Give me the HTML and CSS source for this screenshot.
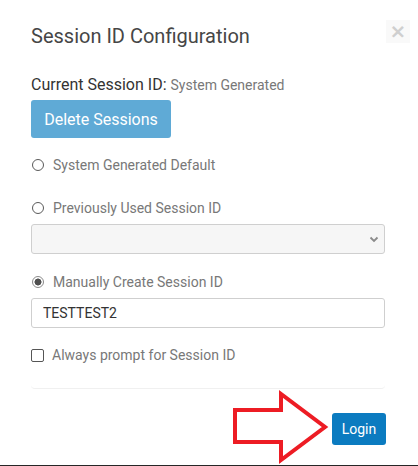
FILE: index.html
```html
<!DOCTYPE html>
<html>
<head>
<meta charset="utf-8">
<link rel="stylesheet" href="styles.css">
</head>
<body>
<div class="page">
  <div class="modal">
    <div class="header">
      <h1 class="title">Session ID Configuration</h1>
      <button class="close" type="button">&times;</button>
    </div>
    <div class="panel">
      <div class="current"><span class="current-label">Current Session ID:</span> <span class="current-value">System Generated</span></div>
      <button class="btn-delete" type="button">Delete Sessions</button>
      <label class="option opt-first"><input type="radio" name="sid" class="radio"><span>System Generated Default</span></label>
      <label class="option opt-prev"><input type="radio" name="sid" class="radio"><span>Previously Used Session ID</span></label>
      <div class="select"><svg width="10" height="7" viewBox="0 0 10 7"><path d="M1.5 1.5 L5 5 L8.5 1.5" fill="none" stroke="#8a8a8a" stroke-width="1.8"/></svg></div>
      <label class="option opt-manual"><input type="radio" name="sid" class="radio" checked><span>Manually Create Session ID</span></label>
      <input class="text-input" type="text" value="TESTTEST2">
      <label class="option opt-check"><input type="checkbox" class="check"><span>Always prompt for Session ID</span></label>
    </div>
    <div class="footer">
      <button class="btn-login" type="button">Login</button>
    </div>
  </div>
  <svg class="arrow" width="418" height="466" viewBox="0 0 418 466">
    <polygon points="235,410 281,410 281,394 325,427 281,460 281,442 235,442" fill="none" stroke="#ed1c24" stroke-width="4" stroke-linejoin="miter"/>
  </svg>
</div>
</body>
</html>
```

FILE: styles.css
```css
* { box-sizing: border-box; }
html, body { margin: 0; padding: 0; background: #fff; }
body { font-family: Roboto, "Liberation Sans", Arial, sans-serif; }
.page {
  position: relative;
  width: 418px;
  height: 466px;
  border-bottom: 1px solid #262626;
  overflow: hidden;
}
.modal { padding: 24px 33px 0 31px; }
.header { display: flex; justify-content: space-between; align-items: flex-start; }
.title {
  margin: 0;
  font-size: 20px;
  line-height: 24px;
  font-weight: 400;
  color: #464646;
}
.close {
  margin: -4px -25px 0 0;
  width: 24px;
  height: 23px;
  padding: 0;
  border: 0;
  background: #f9f9f9;
  color: #cfcfcf;
  font-family: "DejaVu Sans", sans-serif;
  font-size: 20px;
  font-weight: 700;
  line-height: 23px;
  text-align: center;
}
.panel {
  display: flex;
  flex-direction: column;
  align-items: flex-start;
  padding-bottom: 23px;
  border-bottom: 1px solid #f0f0f0;
  border-radius: 0 0 4px 4px;
}
.current { margin-top: 27px; line-height: 20px; }
.current-label { font-size: 16px; color: #333; }
.current-value { font-size: 14px; color: #787878; }
.btn-delete {
  margin-top: 5px;
  height: 38px;
  width: 140px;
  padding: 0;
  border: 0;
  border-radius: 3px;
  background: #5faad6;
  color: #fff;
  font-family: inherit;
  font-size: 16px;
}
.option {
  display: flex;
  align-items: center;
  height: 20px;
  font-size: 14px;
  line-height: 20px;
  color: #787878;
}
.opt-first { margin-top: 17px; }
.opt-prev { margin-top: 23px; }
.opt-manual { margin-top: 18px; }
.opt-check { margin-top: 17px; }
.radio {
  appearance: none;
  -webkit-appearance: none;
  width: 12px;
  height: 12px;
  margin: 0 9px 0 1px;
  border: 1px solid #5a5a5a;
  border-radius: 50%;
  background: #fff;
}
.radio:checked {
  border-color: #8a8a8a;
  background: radial-gradient(circle, #4f4f4f 0 3.2px, #fff 3.8px);
}
.check {
  appearance: none;
  -webkit-appearance: none;
  width: 13px;
  height: 13px;
  margin: 0 8px 0 0;
  border: 1px solid #555;
  border-radius: 2px;
  background: #fff;
}
.select {
  display: flex;
  justify-content: flex-end;
  align-items: center;
  margin-top: 6px;
  width: 354px;
  height: 30px;
  padding-right: 5px;
  border: 1px solid #cfcfcf;
  border-radius: 3px;
  background: #f6f6f6;
}
.text-input {
  margin-top: 6px;
  width: 354px;
  height: 30px;
  padding: 0 11px;
  border: 1px solid #cfcfcf;
  border-radius: 3px;
  background: #fff;
  color: #333;
  font-family: inherit;
  font-size: 14px;
  outline: none;
}
.footer { display: flex; justify-content: flex-end; margin-right: -1px; padding-top: 24px; }
.btn-login {
  width: 54px;
  height: 32px;
  padding: 0;
  border: 0;
  border-radius: 3px;
  background: #0b7bc0;
  color: #fff;
  font-family: inherit;
  font-size: 14px;
}
.arrow { position: absolute; left: 0; top: 0; pointer-events: none; }
```
